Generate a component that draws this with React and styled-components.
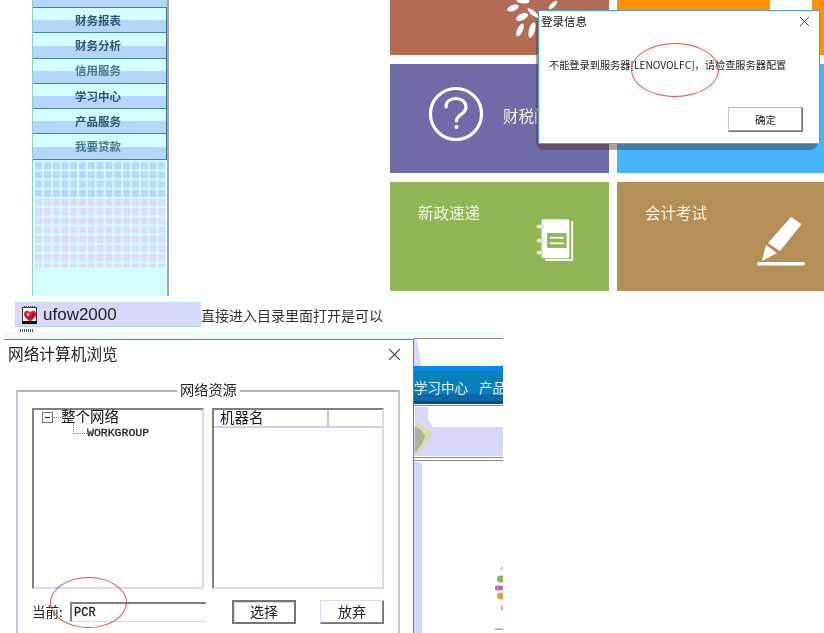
import React from "react"
import styled, { createGlobalStyle } from "styled-components"

const menuItems = ["财务报表", "财务分析", "信用服务", "学习中心", "产品服务", "我要贷款"]

function Pattern() {
  const cells = []
  for (let row = 0; row < 12; row++) {
    for (let col = 0; col < 15; col++) {
      const fill = row < 4 ? "#b9d8fb" : "#dcdcfd"
      cells.push(<rect key={row + "-" + col} x={2 + col * 8.8} y={row * 9.2} width="7.2" height={row === 11 ? 4 : 7.4} rx="1" fill={fill} />)
    }
  }
  return (
    <svg width="132" height="108" viewBox="0 0 132 108">
      {cells}
    </svg>
  )
}

function LeafIcon() {
  const leaves = [
    [18, 1, 6.500, 2.500, 5], [8, 8, 6, 3, -20], [17, 17, 6.500, 3.200, -25], [15, 30, 2.800, 7, 25], [28, 13, 7, 2.200, 40], [27, 30, 3, 8, 15], [48, 5, 5.500, 2.200, -45],
  ]
  return (
    <svg width="60" height="45" viewBox="0 0 60 45">
      {leaves.map(([x, y, rx, ry, r], i) => (
        <ellipse key={i} cx={x} cy={y} rx={rx} ry={ry} fill="#fff" transform={`rotate(${r} ${x} ${y})`} />
      ))}
    </svg>
  )
}

function QuestionIcon() {
  return (
    <svg width="56" height="56" viewBox="0 0 56 56" fill="none" stroke="#fff" strokeWidth="3.2">
      <circle cx="28" cy="28" r="25.500" />
      <path d="M18 21c0-5.500 4.500-8.500 10-8.500s10 3.500 10 8.500c0 4-2.500 5.500-5 7.500-2.500 2-4.500 3-4.500 6.500" strokeLinecap="round" />
      <circle cx="28.500" cy="41" r="2" fill="#fff" stroke="none" />
    </svg>
  )
}

function NotebookIcon() {
  return (
    <svg width="39" height="45" viewBox="0 0 42 48">
      <path d="M38 3h2v43H10v-2h28z" fill="#fff" />
      <rect x="6" y="1" width="30" height="42" rx="2" fill="#fff" />
      <rect x="12" y="16" width="21" height="16" fill="#92b656" />
      <rect x="15" y="20" width="15" height="2" fill="#fff" />
      <rect x="15" y="26" width="15" height="2" fill="#fff" />
      <ellipse cx="4" cy="9" rx="3.500" ry="2.200" fill="#fff" stroke="#92b656" strokeWidth="0.800" />
      <ellipse cx="4" cy="24" rx="3.500" ry="2.200" fill="#fff" stroke="#92b656" strokeWidth="0.800" />
      <ellipse cx="4" cy="37" rx="3.500" ry="2.200" fill="#fff" stroke="#92b656" strokeWidth="0.800" />
    </svg>
  )
}

function PenIcon() {
  return (
    <svg width="50" height="50" viewBox="0 0 50 50" fill="#fff">
      <path d="M35 1l9 6c1 .7 1 1.500.5 2.500L24 35l-12-8z" />
      <path d="M10 29l11 8-15 8z" />
      <rect x="1" y="46" width="48" height="3.500" rx="1.750" />
    </svg>
  )
}

function FlowerIcon() {
  return (
    <svg width="8" height="66" viewBox="0 0 8 66">
      <ellipse cx="7" cy="3" rx="1" ry="2.500" fill="#a8dcd0" />
      <ellipse cx="6" cy="14" rx="4" ry="3.500" fill="#8fb25a" />
      <ellipse cx="4" cy="23" rx="4.500" ry="2.500" fill="#c860c8" />
      <ellipse cx="6" cy="31" rx="4" ry="3.500" fill="#dca040" />
      <ellipse cx="7" cy="43" rx="1.200" ry="3" fill="#f0b090" />
      <rect x="0" y="63.500" width="8" height="1.500" fill="#8ab0cc" />
    </svg>
  )
}

function AppIcon() {
  return (
    <svg width="17" height="18" viewBox="0 0 17 18">
      <rect x="1.500" y="1.500" width="14" height="15" fill="#fff" stroke="#333" />
      <rect x="1" y="15" width="15" height="3" fill="#111" />
      <path d="M3 1h11" stroke="#444" strokeWidth="2" strokeDasharray="1 1" />
      <path d="M9 15.500C4.500 12.500 2.500 10 3 7.500 3.500 4.500 7 3.500 9 6.500 11 3.500 15 4.500 15.500 7.500 16 10 13.500 12.500 9 15.500z" fill="#e01830" />
      <circle cx="7" cy="8.500" r="1.200" fill="#fff" />
      <circle cx="12" cy="8.500" r="1.200" fill="#4a1040" />
      <path d="M6 12h6" stroke="#801050" />
    </svg>
  )
}

function BandArt() {
  return (
    <svg width="20" height="49" viewBox="0 0 20 49">
      <path d="M1 0h13v13l5 7H1z" fill="#d8d8fb" />
      <path d="M1 13l10 8 8 5-7 12-11 11z" fill="#dcdcb0" />
      <path d="M1 19l6 4 4 6-3 8-7 9z" fill="#b0b0a0" />
    </svg>
  )
}

function CloseIcon({ size }) {
  return (
    <svg width={size} height={size} viewBox="0 0 12 12" stroke="#333" strokeWidth="1" fill="none">
      <path d="M1 1l10 10M11 1L1 11" />
    </svg>
  )
}

function App() {
  return (
    <Page>
      <GlobalStyle />
      <TopRow>
        <Sidebar>
          <MenuStub />
          {menuItems.map((item) => (
            <MenuItem key={item} $dim={item === "信用服务" || item === "我要贷款"}>
              <span>{item}</span>
            </MenuItem>
          ))}
          <PatternWrap>
            <Pattern />
          </PatternWrap>
        </Sidebar>
        <Tiles>
          <Tile $bg="#b36c53">
            <LeafSpot>
              <LeafIcon />
            </LeafSpot>
          </Tile>
          <OrangeTile />
          <Tile $bg="#6f6aa8" $pad="22px 0 0 38px">
            <QuestionIcon />
            <TileLabel $offset="19px 0 0 19px">财税问答</TileLabel>
          </Tile>
          <Tile $bg="#46b4ff" />
          <Tile $bg="#92b656" $pad="20px 0 0 28px">
            <TileLabel>新政速递</TileLabel>
            <IconSpot $right={34} $bottom={28}>
              <NotebookIcon />
            </IconSpot>
          </Tile>
          <Tile $bg="#b38f55" $pad="20px 0 0 28px">
            <TileLabel>会计考试</TileLabel>
            <IconSpot $right={18} $bottom={25}>
              <PenIcon />
            </IconSpot>
          </Tile>
        </Tiles>
        <LoginShade />
        <LoginDialog>
          <LoginTitle>
            登录信息
            <CloseIcon size={11} />
          </LoginTitle>
          <LoginMessage>不能登录到服务器[LENOVOLFC]，请检查服务器配置</LoginMessage>
          <LoginActions>
            <LoginButton>确定</LoginButton>
          </LoginActions>
          <Ring $left={92} $top={32} $width={88} $height={54} />
        </LoginDialog>
      </TopRow>

      <CaptionRow>
        <FileChip>
          <AppIcon />
          ufow2000
        </FileChip>
        <Caption>直接进入目录里面打开是可以</Caption>
      </CaptionRow>

      <IconStub />

      <BottomArea>
        <NetDialog>
          <NetTitle>
            网络计算机浏览
            <CloseIcon size={13} />
          </NetTitle>
          <GroupBox>
            <Legend>网络资源</Legend>
            <Lists>
              <Well>
                <TreeRoot>
                  <MinusBox />
                  <TreeDash />
                  整个网络
                </TreeRoot>
                <TreeChild>
                  <TreeElbow />
                  WORKGROUP
                </TreeChild>
              </Well>
              <Well>
                <ColumnHead>
                  <HeadCell $width={115}>机器名</HeadCell>
                  <HeadCell />
                </ColumnHead>
              </Well>
            </Lists>
            <CurrentRow>
              <CurrentLabel>当前:</CurrentLabel>
              <CurrentInput>PCR</CurrentInput>
              <BevelButton $left={26} $pressed>选择</BevelButton>
              <BevelButton $left={24}>放弃</BevelButton>
            </CurrentRow>
          </GroupBox>
          <Ring $left={46} $top={237} $width={77} $height={51} />
        </NetDialog>
        <BackPanel>
          <BackTop />
          <BlueBar>
            学习中心
            <BarGap>产品</BarGap>
          </BlueBar>
          <Stripe $thin />
          <Band>
            <BandArt />
          </Band>
          <Stripe />
          <BackBody>
            <FlowerWrap>
              <FlowerIcon />
            </FlowerWrap>
          </BackBody>
        </BackPanel>
      </BottomArea>
    </Page>
  )
}

const GlobalStyle = createGlobalStyle`
  html, body {
    margin: 0;
    padding: 0;
    background: #fff;
    overflow: hidden;
  }

  body {
    font-family: "Noto Sans CJK SC", "Liberation Sans", sans-serif;
  }
`

const Page = styled.div`
  position: relative;
  width: 824px;
  height: 633px;
  overflow: hidden;
  background: #fff;
  filter: blur(0.35px);
`

const TopRow = styled.div`
  position: relative;
  display: flex;
  height: 296px;
  padding-left: 32px;
`

const Sidebar = styled.div`
  width: 134px;
  height: 296px;
  background: #d5ffff;
  border-left: 1px solid #8ccfc4;
  border-right: 2px solid #a8a89c;
  display: flex;
  flex-direction: column;
  flex-shrink: 0;
`

const MenuStub = styled.div`
  height: 8px;
  background: #b5d6fa;
  border-bottom: 1px solid #3f86a8;
  box-sizing: border-box;
`

const MenuItem = styled.div`
  height: 25.3px;
  box-sizing: border-box;
  display: flex;
  align-items: center;
  justify-content: center;
  padding: 0 3px 1px 0;
  border-right: 1px solid #3a70a8;
  border-bottom: 1px solid #3f86a8;
  background: linear-gradient(#d5ffff 0 52%, #b5d6fa 52% 100%);
  color: ${(p) => (p.$dim ? "#4c7590" : "#2c5570")};
  font-size: 11.500px;
  font-weight: 700;
`

const PatternWrap = styled.div`
  margin-top: 2px;
  height: 108px;
`

const Tiles = styled.div`
  margin-left: 221px;
  width: 434px;
  flex-shrink: 0;
  display: grid;
  grid-template-columns: 219px 207px;
  grid-template-rows: 55px 109px 109px;
  column-gap: 8px;
  row-gap: 9px;
`

const Tile = styled.div`
  position: relative;
  display: flex;
  align-items: flex-start;
  box-sizing: border-box;
  overflow: hidden;
  background: ${(p) => p.$bg};
  padding: ${(p) => p.$pad || 0};
`

const OrangeTile = styled.div`
  height: 55px;
  background: linear-gradient(90deg, #ff9000 0 153px, #fff 153px 195px, #ff9000 195px);
`

const LeafSpot = styled.div`
  position: absolute;
  left: 115px;
  top: 0;
  line-height: 0;
`

const TileLabel = styled.div`
  color: #f2f6e4;
  font-size: 15.500px;
  line-height: 20px;
  white-space: nowrap;
  margin: ${(p) => p.$offset || 0};
`

const IconSpot = styled.div`
  position: absolute;
  right: ${(p) => p.$right}px;
  bottom: ${(p) => p.$bottom}px;
  line-height: 0;
`

const LoginShade = styled.div`
  position: absolute;
  left: 536px;
  top: 16px;
  width: 282px;
  height: 134px;
  border-radius: 8px;
  background: rgba(80, 50, 40, 0.45);
`

const LoginDialog = styled.div`
  position: absolute;
  left: 538px;
  top: 10px;
  width: 282px;
  height: 134px;
  box-sizing: border-box;
  background: #fff;
  border: 1px solid #4aa3df;
  border-radius: 1px;
`

const LoginTitle = styled.div`
  display: flex;
  align-items: center;
  justify-content: space-between;
  padding: 1px 9px 0 2px;
  font-size: 11.500px;
  line-height: 18px;
  color: #111;
`

const LoginMessage = styled.div`
  margin: 28px 0 0 10px;
  font-size: 10.200px;
  line-height: 14px;
  color: #222;
  white-space: nowrap;
`

const LoginActions = styled.div`
  display: flex;
  justify-content: flex-end;
  margin: 35px 16px 0 0;
`

const LoginButton = styled.div`
  width: 75px;
  height: 25px;
  box-sizing: border-box;
  display: flex;
  align-items: center;
  justify-content: center;
  font-size: 10.500px;
  color: #222;
  background: #fff;
  border: 1px solid;
  border-color: #b0b0b0 #77776c #77776c #c8c8dc;
  box-shadow: inset -1px -1px 0 #a0a098;
`

const Ring = styled.div`
  position: absolute;
  left: ${(p) => p.$left}px;
  top: ${(p) => p.$top}px;
  width: ${(p) => p.$width}px;
  height: ${(p) => p.$height}px;
  box-sizing: border-box;
  border: 1px solid #e8484c;
  border-radius: 50%;
  pointer-events: none;
`

const CaptionRow = styled.div`
  display: flex;
  align-items: center;
  height: 25px;
  margin: 6px 0 0 15px;
`

const FileChip = styled.div`
  width: 186px;
  height: 25px;
  box-sizing: border-box;
  display: flex;
  align-items: center;
  gap: 5px;
  padding-left: 5px;
  background: #d8d8fb;
  border-left: 1px solid #b0dcf8;
  border-top: 1px solid #b0dcf8;
  border-bottom: 1px solid #b0dcf8;
  font-family: "Liberation Sans", sans-serif;
  font-size: 17px;
  color: #222;
`

const Caption = styled.div`
  font-size: 14px;
  line-height: 20px;
  color: #333;
  white-space: nowrap;
`

const IconStub = styled.div`
  width: 14px;
  height: 3px;
  margin: 2px 0 0 20px;
  background: repeating-linear-gradient(90deg, #555 0 1px, #fff 1px 2px);
`

const BottomArea = styled.div`
  display: flex;
  height: 302px;
  margin-left: 4px;
  width: 499px;
  box-sizing: border-box;
  border-top: 7px solid #f2fbfb;
`

const NetDialog = styled.div`
  position: relative;
  width: 410px;
  height: 295px;
  box-sizing: border-box;
  flex-shrink: 0;
  background: #fff;
  border-top: 1px solid #2b8fe0;
  border-right: 1px solid #2b8fe0;
`

const NetTitle = styled.div`
  display: flex;
  align-items: center;
  justify-content: space-between;
  padding: 4px 12px 0 4px;
  font-size: 15.700px;
  line-height: 20px;
  color: #222;
`

const GroupBox = styled.div`
  position: relative;
  margin: 26px 0 0 12px;
  width: 384px;
  height: 260px;
  box-sizing: border-box;
  border: 2px solid #c6c6d4;
  border-top-color: #b8b8a8;
  padding: 16px 14px 0 14px;
`

const Legend = styled.div`
  position: absolute;
  top: -12px;
  left: 159px;
  padding: 0 3px;
  background: #fff;
  font-size: 14.200px;
  line-height: 18px;
  color: #222;
`

const Lists = styled.div`
  display: flex;
  gap: 8px;
`

const Well = styled.div`
  width: 172px;
  height: 181px;
  box-sizing: border-box;
  border: 2px solid;
  border-color: #808074 #d8d8fb #d8d8fb #808074;
  background: #fff;
`

const TreeRoot = styled.div`
  display: flex;
  align-items: center;
  height: 18px;
  margin: -4px 0 0 8px;
  font-size: 14.500px;
  color: #111;
`

const MinusBox = styled.div`
  position: relative;
  width: 9px;
  height: 9px;
  margin-top: 4px;
  border: 1px solid #777;
  flex-shrink: 0;

  &::after {
    content: "";
    position: absolute;
    left: 2px;
    top: 4px;
    width: 5px;
    height: 1px;
    background: #222;
  }
`

const TreeDash = styled.div`
  width: 8px;
  margin-top: 4px;
  border-top: 1px dotted #888;
`

const TreeChild = styled.div`
  position: relative;
  margin: 2px 0 0 53px;
  height: 13px;
  line-height: 13px;
  font-family: "Liberation Mono", monospace;
  font-size: 11.500px;
  -webkit-text-stroke: 0.3px #222;
  color: #222;
`

const TreeElbow = styled.div`
  position: absolute;
  left: -14px;
  top: -4px;
  width: 13px;
  height: 11px;
  border-left: 1px dotted #888;
  border-bottom: 1px dotted #888;
`

const ColumnHead = styled.div`
  display: flex;
  height: 16px;
  border-bottom: 2px solid #d0d0e8;
`

const HeadCell = styled.div`
  width: ${(p) => (p.$width ? p.$width + "px" : "auto")};
  flex: ${(p) => (p.$width ? "none" : "1")};
  box-sizing: border-box;
  padding-left: 6px;
  border-right: ${(p) => (p.$width ? "2px solid #c8c8b0" : "none")};
  font-size: 14.500px;
  line-height: 13px;
  color: #111;
`

const CurrentRow = styled.div`
  display: flex;
  align-items: center;
  margin-top: 11px;
`

const CurrentLabel = styled.div`
  width: 38px;
  padding-bottom: 2px;
  font-size: 13.500px;
  line-height: 20px;
  color: #222;
`

const CurrentInput = styled.div`
  width: 136px;
  height: 20px;
  box-sizing: border-box;
  padding-left: 2px;
  border-top: 2px solid #808074;
  border-left: 2px solid #808074;
  border-bottom: 1px solid #d8d8fb;
  font-family: "Liberation Mono", monospace;
  font-size: 12px;
  -webkit-text-stroke: 0.3px #222;
  line-height: 18px;
  color: #222;
`

const BevelButton = styled.div`
  width: 64px;
  height: 24px;
  margin-left: ${(p) => p.$left}px;
  padding-bottom: 2px;
  box-sizing: border-box;
  display: flex;
  align-items: center;
  justify-content: center;
  font-size: 14px;
  color: #222;
  background: #fff;
  border: ${(p) => (p.$pressed ? "2px solid" : "1px solid")};
  border-color: ${(p) => (p.$pressed ? "#77776c" : "#d8d8fb #77776c #77776c #d8d8fb")};
  box-shadow: ${(p) => (p.$pressed ? "inset 1px 1px 0 #d8d8fb" : "inset -1px -1px 0 #88887c")};
`

const BackPanel = styled.div`
  flex: 1;
  display: flex;
  flex-direction: column;
  margin-top: -1px;
  border-top: 1px solid #8a8a80;
  min-width: 0;
`

const BackTop = styled.div`
  height: 27px;
  background: linear-gradient(80deg, #d8d8fb 0 7px, #fff 8px);
`

const BlueBar = styled.div`
  height: 38px;
  box-sizing: border-box;
  padding-top: 11px;
  background: linear-gradient(#0a88e8 0 5px, #0880b8 5px 28px, #0a68a8 28px 35px, #0a4a80 35px);
  color: #e8f4ff;
  font-size: 13.500px;
  line-height: 20px;
  white-space: nowrap;
  overflow: hidden;
`

const BarGap = styled.span`
  margin-left: 11px;
`

const Stripe = styled.div`
  height: ${(p) => (p.$thin ? 3 : 6)}px;
  box-sizing: border-box;
  background: ${(p) =>
    p.$thin
      ? "linear-gradient(#fff 0 1px, #8c8c82 1px 2px, #fff 2px)"
      : "linear-gradient(#fff 0 1px, #8c8c82 1px 2px, #fff 2px 4px, #8c8c82 4px 5px, #fff 5px)"};
`

const Band = styled.div`
  height: 49px;
  line-height: 0;
  background: linear-gradient(#fff 0 20px, #d8d8fb 20px);
`

const BackBody = styled.div`
  position: relative;
  flex: 1;
  background: #fff;
  border-left: 8px solid #d8d8fb;
`

const FlowerWrap = styled.div`
  position: absolute;
  right: 0;
  top: 103px;
  line-height: 0;
`

export default App
